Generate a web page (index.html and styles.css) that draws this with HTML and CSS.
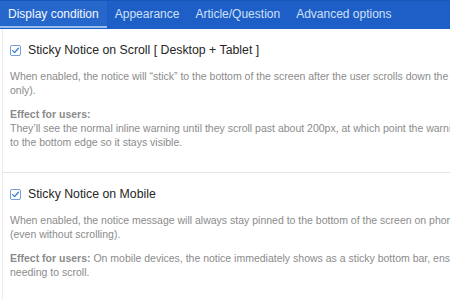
FILE: index.html
```html
<!DOCTYPE html>
<html lang="en">
<head>
<meta charset="utf-8">
<title>Sticky Notice Settings</title>
<link rel="stylesheet" href="styles.css">
</head>
<body>
<div class="page">
  <nav class="tabs">
    <span class="tab active">Display condition</span>
    <span class="tab">Appearance</span>
    <span class="tab">Article/Question</span>
    <span class="tab">Advanced options</span>
  </nav>
  <div class="panel">
    <section class="option">
      <label class="option-title">
        <svg class="check" width="11" height="11" viewBox="0 0 11 11"><rect x="0.5" y="0.5" width="10" height="10" rx="1.5" fill="#fff" stroke="#6f9fd6"/><path d="M2.6 5.6 L4.6 7.6 L8.4 3.3" fill="none" stroke="#3b78cc" stroke-width="1.3" stroke-linecap="round" stroke-linejoin="round"/></svg>
        <span>Sticky Notice on Scroll [ Desktop + Tablet ]</span>
      </label>
      <p class="desc">When enabled, the notice will “stick” to the bottom of the screen after the user scrolls down the page (desktop + tablet only).</p>
      <p class="desc"><strong>Effect for users:</strong><br>They’ll see the normal inline warning until they scroll past about 200px, at which point the warning sticks and is snapped to the bottom edge so it stays visible.</p>
    </section>
    <section class="option">
      <label class="option-title">
        <svg class="check" width="11" height="11" viewBox="0 0 11 11"><rect x="0.5" y="0.5" width="10" height="10" rx="1.5" fill="#fff" stroke="#6f9fd6"/><path d="M2.6 5.6 L4.6 7.6 L8.4 3.3" fill="none" stroke="#3b78cc" stroke-width="1.3" stroke-linecap="round" stroke-linejoin="round"/></svg>
        <span>Sticky Notice on Mobile</span>
      </label>
      <p class="desc">When enabled, the notice message will always stay pinned to the bottom of the screen on phones and small screens (even without scrolling).</p>
      <p class="desc"><strong>Effect for users:</strong> On mobile devices, the notice immediately shows as a sticky bottom bar, ensuring it is seen without needing to scroll.</p>
    </section>
  </div>
</div>
</body>
</html>
```

FILE: styles.css
```css
html, body {
  margin: 0;
  padding: 0;
  background: #fff;
  overflow: hidden;
}

body {
  font-family: "Liberation Sans", Arial, Helvetica, sans-serif;
}

.page {
  width: 600px;
}

.tabs {
  display: flex;
  background: #1e5fc7;
  border-top: 1px solid #1a56b8;
  padding-bottom: 1px;
}

.tab {
  padding: 5px 8px 4px;
  line-height: 16px;
  font-size: 12px;
  color: #cfe0f7;
  border-bottom: 2px solid transparent;
}

.tab.active {
  color: #f4f8ff;
  background: #2667cc;
  border-bottom-color: #9cbeee;
}

.panel {
  margin-left: 2px;
  border-left: 1px solid #ececec;
}

.option {
  padding: 13px 10px 23px 7px;
  border-bottom: 1px solid #e6e6e6;
}

.option-title {
  display: flex;
  align-items: center;
  gap: 7px;
  line-height: 16px;
  font-size: 12.3px;
  color: #262626;
  margin-bottom: 11px;
}

.check {
  display: block;
  flex: none;
}

.desc {
  width: 560px;
  margin: 0 0 10px;
  font-size: 10.5px;
  line-height: 14px;
  color: #8b8b8b;
}

.desc:last-child {
  margin-bottom: 0;
}

.desc strong {
  font-weight: bold;
  color: #8b8b8b;
}
```
